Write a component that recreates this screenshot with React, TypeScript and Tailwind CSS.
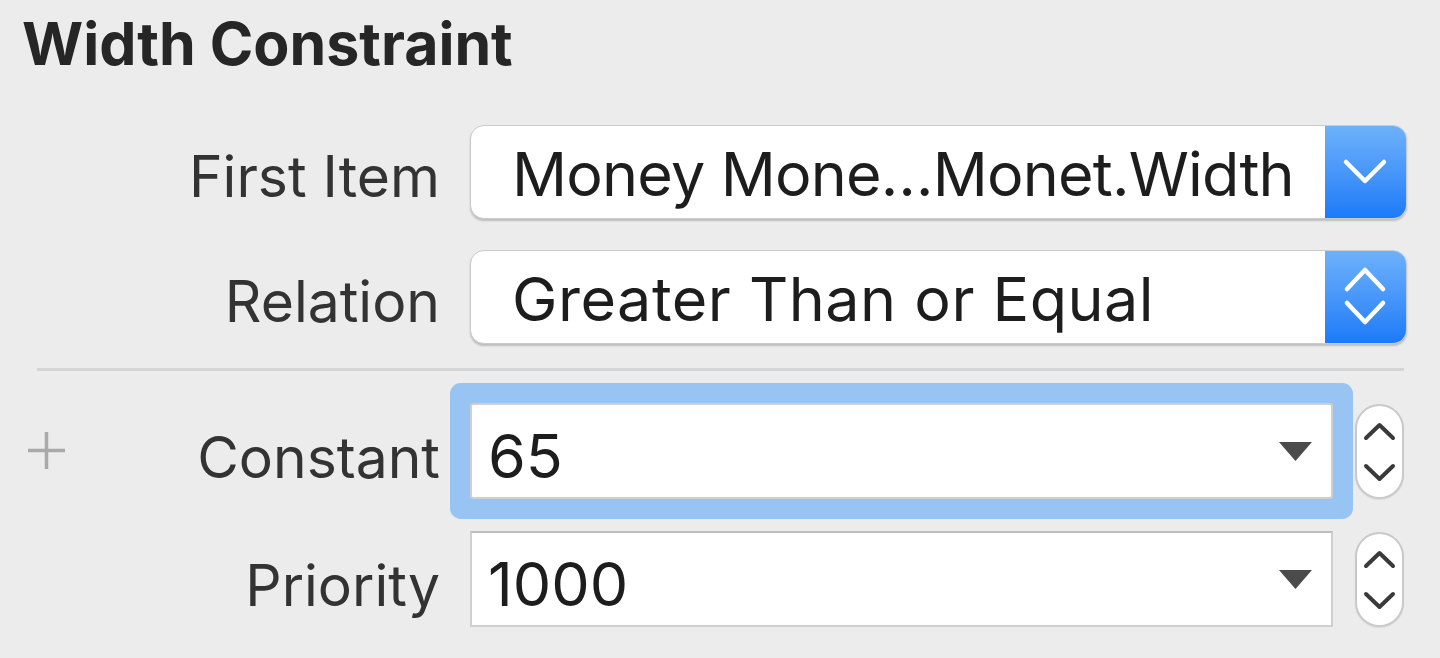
import React from "react";

function BlueDown() {
  return (
    <svg width="81" height="94" viewBox="0 0 81 94">
      <polyline points="21,37 40,56 59,37" fill="none" stroke="#fff" strokeWidth="4.5" strokeLinecap="round" strokeLinejoin="round" />
    </svg>
  );
}

function BlueUpDown() {
  return (
    <svg width="81" height="94" viewBox="0 0 81 94">
      <polyline points="22,39 40,20 58,39" fill="none" stroke="#fff" strokeWidth="4.5" strokeLinecap="round" strokeLinejoin="round" />
      <polyline points="22,53 40,72 58,53" fill="none" stroke="#fff" strokeWidth="4.5" strokeLinecap="round" strokeLinejoin="round" />
    </svg>
  );
}

function Stepper() {
  return (
    <div className="ml-[22px] w-[49px] h-[95px] rounded-full border-2 border-[#c9c9c9] bg-white shadow-[0_1px_1px_rgba(0,0,0,0.08)] overflow-hidden">
      <svg width="45" height="91" viewBox="0 0 45 91">
        <polyline points="9,32 22.5,19 36,32" fill="none" stroke="#3a3a3a" strokeWidth="4" strokeLinecap="round" strokeLinejoin="round" />
        <polyline points="9,60 22.5,73 36,60" fill="none" stroke="#3a3a3a" strokeWidth="4" strokeLinecap="round" strokeLinejoin="round" />
      </svg>
    </div>
  );
}

function Triangle() {
  return (
    <svg width="35" height="21" viewBox="0 0 35 21" className="ml-auto mr-[18px] shrink-0">
      <polygon points="1,1 34,1 17.5,20" fill="#4b4b4b" />
    </svg>
  );
}

function PopupRow({ label, value, double, valueClass }: { label: string; value: string; double?: boolean; valueClass: string }) {
  return (
    <div className="flex items-center h-[94px]">
      <div className="w-[440px] shrink-0 text-right text-[57px] leading-[57px] pt-[9px] text-[#333333]">{label}</div>
      <div className="ml-[30px] w-[937px] h-full flex rounded-[14px] bg-white border border-[#cbcbcb] shadow-[0_2px_2px_rgba(0,0,0,0.2)] overflow-hidden">
        <div className={"flex-1 flex items-center pl-[41px] text-[61px] leading-[61px] pt-[4px] text-[#1d1d1d] whitespace-nowrap " + valueClass}>
          {value}
        </div>
        <div className="w-[81px] shrink-0 bg-gradient-to-b from-[#6db1fa] to-[#1a7af8] flex items-center justify-center">
          {double ? <BlueUpDown /> : <BlueDown />}
        </div>
      </div>
    </div>
  );
}

export default function App() {
  return (
    <div className="w-[1440px] h-[658px] overflow-hidden bg-[#ececec] font-['Inter','Noto_Sans',sans-serif]">
      <div className="pl-[22px] pt-[14px] text-[59px] leading-[59px] font-bold text-[#262626]">Width Constraint</div>

      <div className="mt-[52px] flex flex-col">
        <PopupRow label="First Item" value="Money Mone…Monet.Width" valueClass="tracking-[-0.8px]" />
        <div className="mt-[31px]">
          <PopupRow label="Relation" value="Greater Than or Equal" double valueClass="tracking-[0.5px]" />
        </div>

        <div className="mt-[24px] ml-[37px] w-[1367px] h-[3px] bg-[#d5d5d5]" />

        <div className="mt-[32px] flex items-center h-[96px]">
          <div className="w-[440px] shrink-0 flex items-center justify-between pl-[27px]">
            <svg width="39" height="39" viewBox="0 0 39 39" className="mt-[-2px]">
              <line x1="19.5" y1="1" x2="19.5" y2="38" stroke="#a9a9a9" strokeWidth="3.5" />
              <line x1="1" y1="19.5" x2="38" y2="19.5" stroke="#a9a9a9" strokeWidth="3.5" />
            </svg>
            <span className="text-[57px] leading-[57px] pt-[13px] text-[#333333]">Constant</span>
          </div>
          <div className="ml-[30px] w-[863px] h-full flex items-center bg-white border-2 border-[#cfcfcf] rounded-[3px] shadow-[0_0_0_20px_#97c4f2]">
            <span className="pl-[16px] text-[61px] leading-[61px] pt-[10px] text-[#1d1d1d]">65</span>
            <Triangle />
          </div>
          <Stepper />
        </div>

        <div className="mt-[32px] flex items-center h-[96px]">
          <div className="w-[440px] shrink-0 text-right text-[57px] leading-[57px] pt-[13px] text-[#333333]">Priority</div>
          <div className="ml-[30px] w-[863px] h-full flex items-center bg-white border-2 border-[#cfcfcf] border-t-[#bdbdbd]">
            <span className="pl-[16px] text-[61px] leading-[61px] pt-[10px] text-[#1d1d1d]">1000</span>
            <Triangle />
          </div>
          <Stepper />
        </div>
      </div>
    </div>
  );
}
